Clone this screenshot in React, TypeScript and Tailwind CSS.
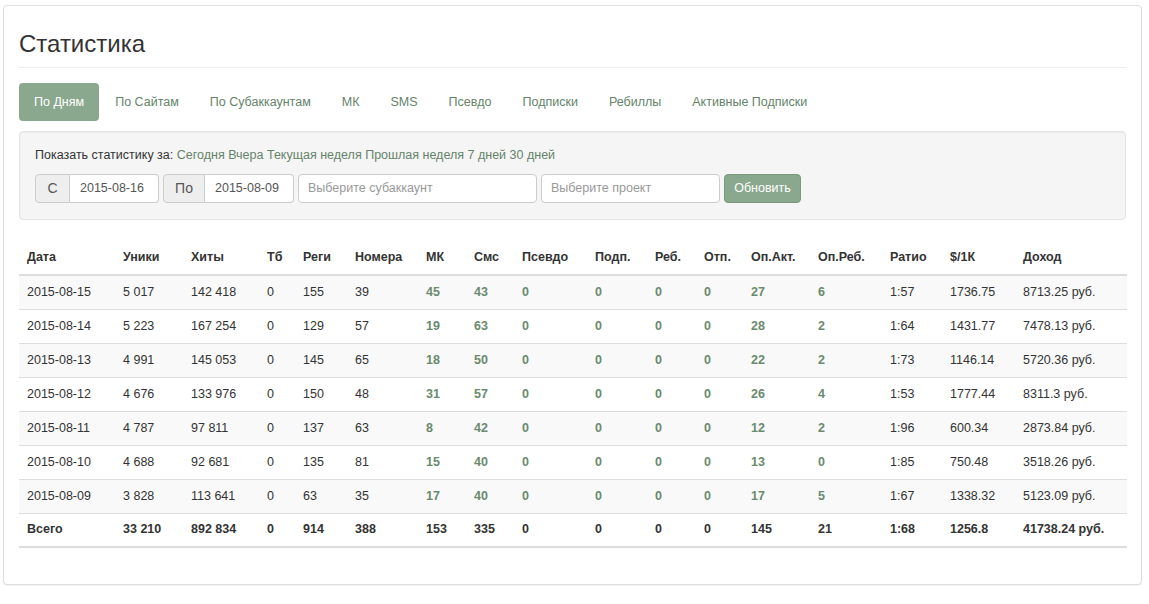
import React from 'react'

// ── Stats page: tabs, filter bar and daily table ──

const LINK = '#64836a'

const TABS = [
  'По Дням', 'По Сайтам', 'По Субаккаунтам', 'МК', 'SMS',
  'Псевдо', 'Подписки', 'Ребиллы', 'Активные Подписки',
]

const COLS: { title: string; w: number; green?: boolean }[] = [
  { title: 'Дата', w: 96 },
  { title: 'Уники', w: 68 },
  { title: 'Хиты', w: 76 },
  { title: 'Тб', w: 36 },
  { title: 'Реги', w: 52 },
  { title: 'Номера', w: 71 },
  { title: 'МК', w: 48, green: true },
  { title: 'Смс', w: 48, green: true },
  { title: 'Псевдо', w: 73, green: true },
  { title: 'Подп.', w: 60, green: true },
  { title: 'Реб.', w: 49, green: true },
  { title: 'Отп.', w: 47, green: true },
  { title: 'Оп.Акт.', w: 67, green: true },
  { title: 'Оп.Реб.', w: 72, green: true },
  { title: 'Ратио', w: 60 },
  { title: '$/1К', w: 73 },
  { title: 'Доход', w: 112 },
]

const ROWS: string[][] = [
  ['2015-08-15', '5 017', '142 418', '0', '155', '39', '45', '43', '0', '0', '0', '0', '27', '6', '1:57', '1736.75', '8713.25 руб.'],
  ['2015-08-14', '5 223', '167 254', '0', '129', '57', '19', '63', '0', '0', '0', '0', '28', '2', '1:64', '1431.77', '7478.13 руб.'],
  ['2015-08-13', '4 991', '145 053', '0', '145', '65', '18', '50', '0', '0', '0', '0', '22', '2', '1:73', '1146.14', '5720.36 руб.'],
  ['2015-08-12', '4 676', '133 976', '0', '150', '48', '31', '57', '0', '0', '0', '0', '26', '4', '1:53', '1777.44', '8311.3 руб.'],
  ['2015-08-11', '4 787', '97 811', '0', '137', '63', '8', '42', '0', '0', '0', '0', '12', '2', '1:96', '600.34', '2873.84 руб.'],
  ['2015-08-10', '4 688', '92 681', '0', '135', '81', '15', '40', '0', '0', '0', '0', '13', '0', '1:85', '750.48', '3518.26 руб.'],
  ['2015-08-09', '3 828', '113 641', '0', '63', '35', '17', '40', '0', '0', '0', '0', '17', '5', '1:67', '1338.32', '5123.09 руб.'],
]

const TOTAL = ['Всего', '33 210', '892 834', '0', '914', '388', '153', '335', '0', '0', '0', '0', '145', '21', '1:68', '1256.8', '41738.24 руб.']

const PERIODS = ['Сегодня', 'Вчера', 'Текущая неделя', 'Прошлая неделя', '7 дней', '30 дней']

export default function App() {
  return (
    <div
      className="min-h-screen bg-white px-[3px] pt-[5px] text-[12.5px] text-[#333]"
      style={{ fontFamily: '"Liberation Sans", Arial, sans-serif' }}
    >
      <div className="w-[1139px] rounded border border-[#ddd] bg-white px-[15px] pb-9 shadow-[0_1px_1px_rgba(0,0,0,0.05)]">
        {/* ── Title ─────────────────────────── */}
        <div className="border-b border-[#eee] pb-[8px] pt-[23px]">
          <h1 className="text-[24px] leading-[30px] text-[#333]">Статистика</h1>
        </div>

        {/* ── Tabs ──────────────────────────── */}
        <ul className="mt-[15px] flex">
          {TABS.map((t, i) => (
            <li
              key={t}
              className={
                i === 0
                  ? 'mr-px flex h-[38px] items-center rounded bg-[#8aa88d] px-[15px] text-white'
                  : 'mr-px flex h-[38px] items-center px-[15px]'
              }
              style={i === 0 ? undefined : { color: LINK }}
            >
              {t}
            </li>
          ))}
        </ul>

        {/* ── Filter well ───────────────────── */}
        <div className="mt-[10px] rounded border border-[#e3e3e3] bg-[#f5f5f5] px-[15px] pb-[16px] pt-[15px] shadow-[inset_0_1px_1px_rgba(0,0,0,0.05)]">
          <div className="leading-[16px]">
            Показать статистику за:{' '}
            {PERIODS.map((p, i) => (
              <span key={p} style={{ color: LINK }}>
                {p}
                {i < PERIODS.length - 1 ? ' ' : ''}
              </span>
            ))}
          </div>
          <div className="mt-[11px] flex items-center gap-1">
            <div className="flex h-[29px]">
              <span className="flex w-[35px] items-center justify-center rounded-l border border-[#ccc] bg-[#eee] text-[14px] text-[#555]">С</span>
              <span className="flex w-[89px] items-center rounded-r border border-l-0 border-[#ccc] bg-white px-[10px] text-[#555]">2015-08-16</span>
            </div>
            <div className="flex h-[29px]">
              <span className="flex w-[42px] items-center justify-center rounded-l border border-[#ccc] bg-[#eee] text-[14px] text-[#555]">По</span>
              <span className="flex w-[89px] items-center rounded-r border border-l-0 border-[#ccc] bg-white px-[10px] text-[#555]">2015-08-09</span>
            </div>
            <span className="flex h-[29px] w-[239px] items-center rounded border border-[#ccc] bg-white px-[9px] text-[#999]">Выберите субаккаунт</span>
            <span className="flex h-[29px] w-[179px] items-center rounded border border-[#ccc] bg-white px-[9px] text-[#999]">Выберите проект</span>
            <button className="h-[29px] w-[77px] rounded border border-[#7a987d] bg-[#8aa88d] text-white">Обновить</button>
          </div>
        </div>

        {/* ── Table ─────────────────────────── */}
        <table className="mt-[20px] w-full table-fixed border-collapse">
          <colgroup>
            {COLS.map((c) => (
              <col key={c.title} style={{ width: c.w }} />
            ))}
          </colgroup>
          <thead>
            <tr>
              {COLS.map((c) => (
                <th key={c.title} className="border-b-2 border-[#ddd] px-2 pb-[8px] pt-[8px] text-left font-bold leading-[18px]">
                  {c.title}
                </th>
              ))}
            </tr>
          </thead>
          <tbody>
            {ROWS.map((r, ri) => (
              <tr key={r[0]} className={ri % 2 === 0 ? 'bg-[#f9f9f9]' : 'bg-white'}>
                {r.map((v, ci) => (
                  <td
                    key={ci}
                    className={COLS[ci].green ? 'h-[34px] border-t border-[#ddd] px-2 font-bold' : 'h-[34px] border-t border-[#ddd] px-2'}
                    style={COLS[ci].green ? { color: '#6a8a6e' } : undefined}
                  >
                    {v}
                  </td>
                ))}
              </tr>
            ))}
            <tr>
              {TOTAL.map((v, ci) => (
                <td key={ci} className="h-[34px] border-b-2 border-t border-[#ddd] px-2 font-bold">
                  {v}
                </td>
              ))}
            </tr>
          </tbody>
        </table>
      </div>
    </div>
  )
}
